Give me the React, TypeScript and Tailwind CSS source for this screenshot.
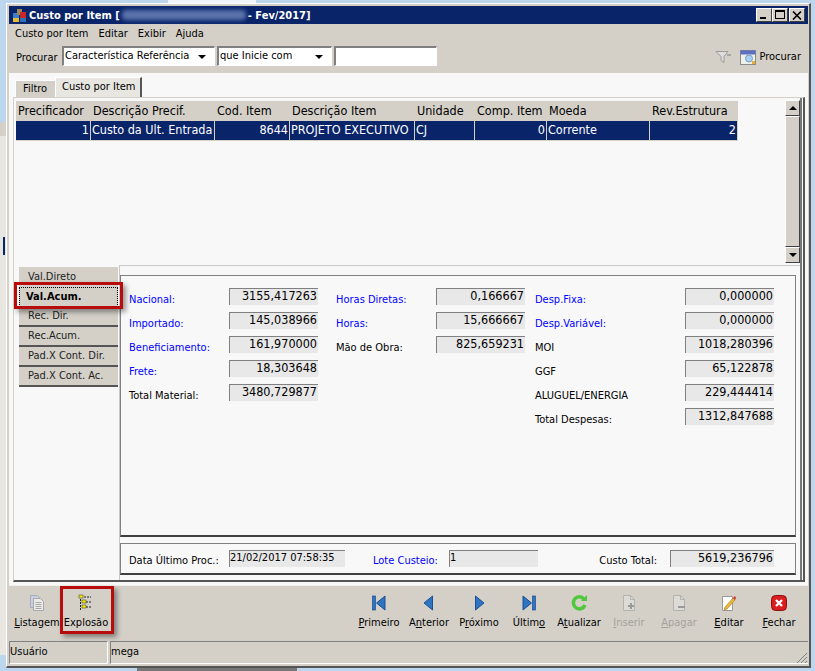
import React from "react";

function Field({ value, align = "right", w = "w-[89px]" }: { value: string; align?: "right" | "left"; w?: string }) {
  return (
    <div
      className={`${w} h-[17px] shrink-0 whitespace-nowrap overflow-hidden bg-[#e8e8e8] border-l border-t border-[#808080] leading-[14px] ${
        align === "right" ? "text-[12.5px] text-right pr-px" : "text-[11px] text-left"
      }`}
    >
      {value}
    </div>
  );
}

function Row({ label, value, blue, labelW }: { label: string; value: string; blue?: boolean; labelW: string }) {
  return (
    <div className="flex h-[24px]">
      <div className={`${labelW} pt-[3px] leading-[17px] ${blue ? "text-[#0000ff]" : "text-black"}`}>{label}</div>
      <Field value={value} />
    </div>
  );
}

function SideTab({ label, active, first }: { label: string; active?: boolean; first?: boolean }) {
  if (active) {
    return (
      <div className="h-[20px] w-[99px] bg-[#d4d0c8] flex items-center pl-[6px] font-bold text-black border border-dotted border-black">
        {label}
      </div>
    );
  }
  return (
    <div className={`h-[20px] w-[99px] bg-[#d4d0c8] ${first ? "" : "border-b-2 border-[#555]"} flex items-center pl-[9px] pt-px text-[#222]`}>
      {label}
    </div>
  );
}

function ToolBtn({ label, u, w, disabled, children }: { label: string; u: number; w: string; disabled?: boolean; children: React.ReactNode }) {
  return (
    <div className={`${w} flex flex-col items-center`}>
      <div className="h-[24px] flex items-center justify-center">{children}</div>
      <div className={`leading-[16px] whitespace-nowrap ${disabled ? "text-[#a5a29b]" : "text-black"}`}>
        {label.slice(0, u)}
        <span className="underline">{label[u]}</span>
        {label.slice(u + 1)}
      </div>
    </div>
  );
}

const cols = [
  { t: "Precificador", w: "w-[75px]", v: "1", r: true },
  { t: "Descrição Precif.", w: "w-[124px]", v: "Custo da Ult. Entrada" },
  { t: "Cod. Item", w: "w-[75px]", v: "8644", r: true },
  { t: "Descrição Item", w: "w-[125px]", v: "PROJETO EXECUTIVO" },
  { t: "Unidade", w: "w-[60px]", v: "CJ" },
  { t: "Comp. Item", w: "w-[72px]", v: "0", r: true },
  { t: "Moeda", w: "w-[103px]", v: "Corrente" },
  { t: "Rev.Estrutura", w: "w-[88px]", v: "2", r: true },
];

function NavTriangle({ dir, bar }: { dir: "l" | "r"; bar?: boolean }) {
  return (
    <svg width="16" height="16" viewBox="0 0 16 16">
      {dir === "l" ? (
        <>
          {bar && <rect x="1.5" y="1" width="3" height="14" fill="#2f74c0" stroke="#1b4f96" strokeWidth="0.7" />}
          <path d={bar ? "M14 1v14L5.5 8z" : "M11.5 1v14L3 8z"} fill="#2f74c0" stroke="#1b4f96" />
        </>
      ) : (
        <>
          {bar && <rect x="11.5" y="1" width="3" height="14" fill="#2f74c0" stroke="#1b4f96" strokeWidth="0.7" />}
          <path d={bar ? "M2 1v14L10.5 8z" : "M4.5 1v14L13 8z"} fill="#2f74c0" stroke="#1b4f96" />
        </>
      )}
    </svg>
  );
}

function DocIcon({ mark }: { mark?: "plus" | "minus" }) {
  return (
    <svg width="16" height="18" viewBox="0 0 16 18">
      <path d="M2.5 1.5h7l4 4v11h-11z" fill="#dddbd5" stroke="#b4b2ac" />
      <path d="M9.5 1.5v4h4" fill="none" stroke="#b4b2ac" />
      {mark === "plus" && <path d="M10 9v6M7 12h6" stroke="#999" strokeWidth="2" />}
      {mark === "minus" && <path d="M7 13h7" stroke="#999" strokeWidth="2" />}
    </svg>
  );
}

function ListIcon() {
  return (
    <svg width="16" height="18" viewBox="0 0 16 18">
      <path d="M1.5 1.5h7l2 2v10h-9z" fill="#c9cfe0" stroke="#a8acb8" />
      <path d="M4.5 4.5h7l3 3v9h-10z" fill="#eceae6" stroke="#a8a8a8" />
      <path d="M6.5 8.5h6M6.5 10.5h6M6.5 12.5h6M6.5 14.5h6" stroke="#a8a8a8" />
    </svg>
  );
}

function Combo({ value, w }: { value: string; w: string }) {
  return (
    <div className={`${w} h-[20px] bg-white border-l-2 border-t-2 border-[#808080] border-r border-b border-r-white border-b-white flex items-center justify-between pl-[1px] pr-[8px] shrink-0 whitespace-nowrap overflow-hidden`}>
      <span>{value}</span>
      <span className="w-0 h-0 shrink-0 border-l-[4px] border-r-[4px] border-t-[4px] border-l-transparent border-r-transparent border-t-black" />
    </div>
  );
}

const raised = "bg-[#d4d0c8] border-t border-l border-white border-r border-b border-r-[#404040] border-b-[#404040]";

export default function App() {
  return (
    <div className="relative w-[815px] h-[671px] overflow-hidden bg-[#bcd6ee] text-[11px] text-black font-['DejaVu_Sans',sans-serif] [font-stretch:condensed]">
      {/* window behind, only its edge shows */}
      <div className="absolute left-0 top-[122px] w-[6px] h-[533px] bg-[#e8e6e0] border-t-[14px] border-[#d4d0c8]">
        <div className="mt-[101px] ml-[3px] w-[2px] h-[18px] bg-[#0a246a]" />
      </div>
      <div className="absolute left-[168px] top-0 w-[88px] h-[3px] bg-[#eef4fa]" />
      <div className="absolute left-[137px] top-[668px] w-[160px] h-[3px] bg-[#777]" />

      <div className="absolute left-[6px] top-[3px] w-[805px] h-[665px] bg-[#d4d0c8] border-t border-l border-white border-r-2 border-b-2 border-r-[#555] border-b-[#555] pl-[2px] pt-[2px] pb-[2px] pr-[1px] flex flex-col">
        {/* title bar */}
        <div className="h-[18px] bg-[#0a246a] flex items-center pl-[3px] pr-[3px] shrink-0">
          <svg width="15" height="15" viewBox="0 0 15 15" className="mr-[2px]">
            <rect x="1" y="5" width="6" height="5" fill="#3a7fc8" />
            <rect x="5" y="1" width="5" height="6" fill="#9a8a5a" />
            <rect x="1" y="10" width="6" height="4" fill="#e8b838" />
            <rect x="8" y="4" width="6" height="6" fill="#c82828" />
            <rect x="8" y="10" width="6" height="4" fill="#2f6fb8" />
          </svg>
          <span className="font-bold text-white leading-none whitespace-nowrap">Custo por Item [</span>
          <span className="w-[124px] h-[10px] mx-[2px] bg-[#5b74ad] rounded-sm blur-[2px]" />
          <span className="font-bold text-white leading-none whitespace-nowrap">- Fev/2017]</span>
          <div className="ml-auto flex gap-[0px]">
            <div className={`w-[16px] h-[14px] relative ${raised}`}>
              <span className="absolute left-[3px] bottom-[2px] w-[6px] h-[2px] bg-black" />
            </div>
            <div className={`w-[16px] h-[14px] relative ${raised}`}>
              <span className="absolute left-[2px] top-[1px] w-[10px] h-[9px] border border-black border-t-2" />
            </div>
            <div className={`w-[16px] h-[14px] ml-[1px] flex items-center justify-center ${raised}`}>
              <svg width="10" height="9" viewBox="0 0 10 9">
                <path d="M1 0.5L9 8.5M9 0.5L1 8.5" stroke="#000" strokeWidth="1.6" />
              </svg>
            </div>
          </div>
        </div>
        {/* menu */}
        <div className="h-[21px] flex items-center pl-[6px] gap-[10px] shrink-0">
          <span>Custo por Item</span>
          <span>Editar</span>
          <span>Exibir</span>
          <span>Ajuda</span>
        </div>
        {/* search */}
        <div className="h-[28px] flex items-start pt-px pl-[7px] pr-[7px] shrink-0">
          <span className="w-[46px] mt-[3px] leading-[17px]">Procurar</span>
          <Combo value="Característica Referência" w="w-[153px]" />
          <div className="w-[2px]" />
          <Combo value="que Inicie com" w="w-[115px]" />
          <div className="w-[2px]" />
          <div className="w-[103px] h-[20px] bg-white border-l-2 border-t-2 border-[#808080] border-r border-b border-r-white border-b-white" />
          <div className="ml-auto mt-[3px] flex items-center gap-[9px]">
            <svg width="16" height="14" viewBox="0 0 16 14">
              <path d="M1 1.5h12L9 6.5v6l-3-2v-4z" fill="#ddd" stroke="#9a9a9a" />
              <path d="M12 5h4" stroke="#9a9a9a" strokeWidth="1.5" />
            </svg>
            <div className="flex items-center gap-[3px]">
              <svg width="16" height="15" viewBox="0 0 16 15">
                <rect x="0.5" y="0.5" width="15" height="14" fill="#f0efe9" stroke="#8a8a8a" />
                <rect x="0.5" y="0.5" width="15" height="4" fill="#5c70c0" />
                <circle cx="9" cy="8.5" r="3.5" fill="#a8d0f0" stroke="#7a9ec0" />
                <rect x="12" y="11" width="3" height="3" fill="#e8b030" />
              </svg>
              <span>Procurar</span>
            </div>
          </div>
        </div>
        {/* body */}
        <div className="flex-1 bg-[#f8f8f8] flex flex-col pl-[4px] pr-[3px] pb-[3px] min-h-0">
          {/* tabs */}
          <div className="h-[24px] flex items-end pl-[2px] shrink-0">
            <div className="w-[40px] h-[17px] bg-[#d4d0c8] border-t border-l border-white flex items-center pl-[7px]">Filtro</div>
            <div className="w-[87px] h-[20px] bg-[#e8e6e0] border-t border-l border-white border-r-2 border-r-[#555] flex items-center pl-[6px] whitespace-nowrap">Custo por Item</div>
          </div>
          {/* tab page */}
          <div className="flex-1 min-h-0 border-t border-l border-[#d4d0c8] border-r-2 border-b-2 border-r-[#555] border-b-[#555] pr-px flex flex-col">
            <div className="flex-1 min-h-0 border-r-2 border-[#777] flex flex-col">
              <div className="h-[167px] relative pl-[2px] pt-[3px] shrink-0 text-[12.5px]">
                <div className="flex bg-[#d4d0c8] w-[722px] h-[20px] items-center">
                  {cols.map((c) => (
                    <div key={c.t} className={`${c.w} pl-[2px] whitespace-nowrap overflow-hidden`}>
                      {c.t}
                    </div>
                  ))}
                </div>
                <div className="flex bg-[#0a246a] w-[722px] h-[20px] items-center text-white border-b border-[#d4d0c8]">
                  {cols.map((c) => (
                    <div key={c.t} className={`${c.w} h-full flex items-center px-[1px] border-r border-[#d4d0c8] whitespace-nowrap overflow-hidden ${c.r ? "justify-end" : ""}`}>
                      {c.v}
                    </div>
                  ))}
                </div>
                {/* scrollbar */}
                <div className="absolute right-0 top-[2px] w-[15px] h-[163px] flex flex-col">
                  <div className={`h-[16px] flex items-center justify-center ${raised}`}>
                    <span className="w-0 h-0 border-l-[4px] border-r-[4px] border-b-[4px] border-l-transparent border-r-transparent border-b-black" />
                  </div>
                  <div className={`flex-1 ${raised}`} />
                  <div className={`h-[16px] flex items-center justify-center ${raised}`}>
                    <span className="w-0 h-0 border-l-[4px] border-r-[4px] border-t-[4px] border-l-transparent border-r-transparent border-t-black" />
                  </div>
                </div>
              </div>
              {/* lower */}
              <div className="flex flex-1 min-h-0">
                <div className="w-[105px] pt-[2px] pl-[5px] shrink-0 flex flex-col">
                  <SideTab label="Val.Direto" first />
                  <SideTab label="Val.Acum." active />
                  <SideTab label="Rec. Dir." />
                  <SideTab label="Rec.Acum." />
                  <SideTab label="Pad.X Cont. Dir." />
                  <SideTab label="Pad.X Cont. Ac." />
                </div>
                <div className="flex-1 border-l border-t border-[#c8c8c8] pt-[9px] pb-[5px] pr-[4px] flex flex-col gap-[6px]">
                  <div className="flex-1 border border-[#808080] border-b-2 border-b-[#404040] pl-[8px] pt-[12px] flex">
                    <div className="w-[207px]">
                      <Row labelW="w-[100px]" label="Nacional:" value="3155,417263" blue />
                      <Row labelW="w-[100px]" label="Importado:" value="145,038966" blue />
                      <Row labelW="w-[100px]" label="Beneficiamento:" value="161,970000" blue />
                      <Row labelW="w-[100px]" label="Frete:" value="18,303648" blue />
                      <Row labelW="w-[100px]" label="Total Material:" value="3480,729877" />
                    </div>
                    <div className="w-[199px]">
                      <Row labelW="w-[100px]" label="Horas Diretas:" value="0,166667" blue />
                      <Row labelW="w-[100px]" label="Horas:" value="15,666667" blue />
                      <Row labelW="w-[100px]" label="Mão de Obra:" value="825,659231" />
                    </div>
                    <div>
                      <Row labelW="w-[150px]" label="Desp.Fixa:" value="0,000000" blue />
                      <Row labelW="w-[150px]" label="Desp.Variável:" value="0,000000" blue />
                      <Row labelW="w-[150px]" label="MOI" value="1018,280396" />
                      <Row labelW="w-[150px]" label="GGF" value="65,122878" />
                      <Row labelW="w-[150px]" label="ALUGUEL/ENERGIA" value="229,444414" />
                      <Row labelW="w-[150px]" label="Total Despesas:" value="1312,847688" />
                    </div>
                  </div>
                  <div className="h-[32px] shrink-0 border border-[#808080] border-b-2 border-b-[#404040] pl-[8px] pt-[6px] flex items-start">
                    <span className="w-[100px] mt-[2px] leading-[17px]">Data Último Proc.:</span>
                    <Field value="21/02/2017 07:58:35" align="left" w="w-[116px]" />
                    <span className="w-[76px] ml-[28px] mt-[2px] leading-[17px] text-[#0000ff]">Lote Custeio:</span>
                    <Field value="1" align="left" />
                    <span className="w-[119px] mt-[2px] leading-[17px] text-right">Custo Total:</span>
                    <div className="w-[13px]" />
                    <Field value="5619,236796" w="w-[104px]" />
                  </div>
                </div>
              </div>
            </div>
          </div>
        </div>
        {/* toolbar */}
        <div className="h-[56px] border-t border-[#f0f0ea] flex items-start pt-[5px] pl-[5px] pr-[4px] shrink-0">
          <ToolBtn label="Listagem" u={0} w="w-[46px]"><ListIcon /></ToolBtn>
          <ToolBtn label="Explosão" u={99} w="w-[52px]">
            <svg width="16" height="18" viewBox="0 0 16 18">
              <path d="M2.5 2v15M3 3h10M5 8h9M5 13h9" stroke="#222" strokeDasharray="2 1" fill="none" />
              <rect x="1" y="1" width="4" height="3" fill="#f5e900" stroke="#333" strokeWidth="0.5" />
              <rect x="4" y="6" width="4" height="3" fill="#f5e900" stroke="#333" strokeWidth="0.5" />
              <rect x="4" y="11" width="4" height="3" fill="#f5e900" stroke="#333" strokeWidth="0.5" />
            </svg>
          </ToolBtn>
          <div className="ml-auto flex">
            <ToolBtn label="Primeiro" u={0} w="w-[50px]"><NavTriangle dir="l" bar /></ToolBtn>
            <ToolBtn label="Anterior" u={1} w="w-[50px]"><NavTriangle dir="l" /></ToolBtn>
            <ToolBtn label="Próximo" u={1} w="w-[50px]"><NavTriangle dir="r" /></ToolBtn>
            <ToolBtn label="Último" u={5} w="w-[50px]"><NavTriangle dir="r" bar /></ToolBtn>
            <ToolBtn label="Atualizar" u={1} w="w-[50px]">
              <svg width="18" height="18" viewBox="0 0 18 18">
                <path d="M14 5a6 6 0 1 0 1 6" fill="none" stroke="#4ec83c" strokeWidth="3.5" />
                <path d="M11 7h6V1z" fill="#4ec83c" />
              </svg>
            </ToolBtn>
            <ToolBtn label="Inserir" u={0} w="w-[50px]" disabled><DocIcon mark="plus" /></ToolBtn>
            <ToolBtn label="Apagar" u={0} w="w-[50px]" disabled><DocIcon mark="minus" /></ToolBtn>
            <ToolBtn label="Editar" u={0} w="w-[50px]">
              <svg width="16" height="18" viewBox="0 0 16 18">
                <path d="M1.5 2.5h10v14h-10z" fill="#fff" stroke="#999" />
                <path d="M4 13l8-9 2 2-8 9-3 1z" fill="#e8b838" stroke="#a87818" strokeWidth="0.6" />
                <path d="M12 4l2-2 1 2-1 2z" fill="#d83030" />
              </svg>
            </ToolBtn>
            <ToolBtn label="Fechar" u={0} w="w-[50px]">
              <svg width="16" height="16" viewBox="0 0 16 16">
                <rect x="0.5" y="0.5" width="15" height="15" rx="4" fill="#d81e1e" stroke="#8c1010" />
                <path d="M5 5l6 6M11 5l-6 6" stroke="#fff" strokeWidth="2.4" />
              </svg>
            </ToolBtn>
          </div>
        </div>
        {/* status */}
        <div className="h-[23px] flex gap-[2px] shrink-0 relative">
          <div className="w-[99px] border-t border-l border-[#808080] border-r border-b border-r-white border-b-white flex items-center">Usuário</div>
          <div className="flex-1 border-t border-l border-[#808080] border-b border-b-white flex items-center">mega</div>
          <svg width="12" height="12" viewBox="0 0 12 12" className="absolute right-0 bottom-0">
            <path d="M11 1L1 11M11 5L5 11M11 9L9 11" stroke="#808080" />
          </svg>
        </div>
      </div>
      {/* red highlights */}
      <div className="absolute left-[14px] top-[282px] w-[109px] h-[27px] border-[3px] border-[#b80c0c] shadow-[3px_3px_5px_rgba(0,0,0,0.4)]" />
      <div className="absolute left-[60px] top-[586px] w-[54px] h-[48px] border-[3px] border-[#b80c0c] shadow-[3px_3px_5px_rgba(0,0,0,0.4)]" />
    </div>
  );
}
